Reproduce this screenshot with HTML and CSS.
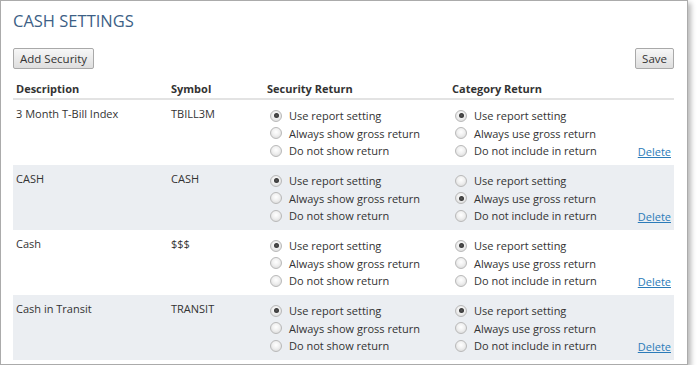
FILE: index.html
```html
<!DOCTYPE html>
<html>
<head>
<meta charset="utf-8">
<link rel="stylesheet" href="styles.css">
</head>
<body>
<div class="frame">
  <h1 class="title">CASH SETTINGS</h1>
  <div class="toolbar">
    <button class="btn">Add Security</button>
    <button class="btn">Save</button>
  </div>
  <div class="table">
    <div class="row head">
      <div class="cell">Description</div>
      <div class="cell">Symbol</div>
      <div class="cell">Security Return</div>
      <div class="cell">Category Return</div>
      <div class="cell"></div>
    </div>

    <div class="row">
      <div class="cell txt">3 Month T-Bill Index</div>
      <div class="cell txt">TBILL3M</div>
      <div class="cell opts">
        <div class="opt"><span class="radio on"></span>Use report setting</div>
        <div class="opt"><span class="radio"></span>Always show gross return</div>
        <div class="opt"><span class="radio"></span>Do not show return</div>
      </div>
      <div class="cell opts">
        <div class="opt"><span class="radio on"></span>Use report setting</div>
        <div class="opt"><span class="radio"></span>Always use gross return</div>
        <div class="opt"><span class="radio"></span>Do not include in return</div>
      </div>
      <div class="cell del"><a href="#">Delete</a></div>
    </div>

    <div class="row alt">
      <div class="cell txt">CASH</div>
      <div class="cell txt">CASH</div>
      <div class="cell opts">
        <div class="opt"><span class="radio on"></span>Use report setting</div>
        <div class="opt"><span class="radio"></span>Always show gross return</div>
        <div class="opt"><span class="radio"></span>Do not show return</div>
      </div>
      <div class="cell opts">
        <div class="opt"><span class="radio"></span>Use report setting</div>
        <div class="opt"><span class="radio on"></span>Always use gross return</div>
        <div class="opt"><span class="radio"></span>Do not include in return</div>
      </div>
      <div class="cell del"><a href="#">Delete</a></div>
    </div>

    <div class="row">
      <div class="cell txt">Cash</div>
      <div class="cell txt">$$$</div>
      <div class="cell opts">
        <div class="opt"><span class="radio on"></span>Use report setting</div>
        <div class="opt"><span class="radio"></span>Always show gross return</div>
        <div class="opt"><span class="radio"></span>Do not show return</div>
      </div>
      <div class="cell opts">
        <div class="opt"><span class="radio on"></span>Use report setting</div>
        <div class="opt"><span class="radio"></span>Always use gross return</div>
        <div class="opt"><span class="radio"></span>Do not include in return</div>
      </div>
      <div class="cell del"><a href="#">Delete</a></div>
    </div>

    <div class="row alt">
      <div class="cell txt">Cash in Transit</div>
      <div class="cell txt">TRANSIT</div>
      <div class="cell opts">
        <div class="opt"><span class="radio on"></span>Use report setting</div>
        <div class="opt"><span class="radio"></span>Always show gross return</div>
        <div class="opt"><span class="radio"></span>Do not show return</div>
      </div>
      <div class="cell opts">
        <div class="opt"><span class="radio on"></span>Use report setting</div>
        <div class="opt"><span class="radio"></span>Always use gross return</div>
        <div class="opt"><span class="radio"></span>Do not include in return</div>
      </div>
      <div class="cell del"><a href="#">Delete</a></div>
    </div>
  </div>
</div>
</body>
</html>
```

FILE: styles.css
```css
html, body {
  margin: 0;
  padding: 0;
  background: #ffffff;
}
body {
  font-family: "Open Sans", "Noto Sans", sans-serif;
  font-size: 11px;
  color: #333333;
}
.frame {
  box-sizing: border-box;
  width: 688px;
  height: 365px;
  border: 1px solid #ababab;
  box-shadow: 3px 3px 5px rgba(0, 0, 0, 0.28);
  padding: 0 13px 0 12px;
  background: #ffffff;
}
.title {
  margin: 0;
  padding-top: 9px;
  font-size: 16.5px;
  font-weight: 400;
  line-height: 22px;
  color: #3d5f86;
}
.toolbar {
  display: flex;
  justify-content: space-between;
  margin-top: 16px;
}
.btn {
  font-family: inherit;
  font-size: 11.5px;
  color: #333333;
  height: 21px;
  padding: 0 6px;
  border: 1px solid #a9a9a9;
  border-radius: 2px;
  background: linear-gradient(#f7f7f7, #dedede);
  line-height: 17px;
}
.table {
  margin-top: 11px;
}
.row {
  display: grid;
  grid-template-columns: 155px 96px 185px 1fr auto;
  height: 65px;
}
.row.head {
  font-weight: 700;
  border-bottom: 2px solid #e3e3e3;
  box-sizing: border-box;
  height: 20px;
}
.row.head .cell {
  line-height: 17px;
}
.row.alt {
  background: #ebeef2;
}
.cell {
  padding-left: 3px;
}
.txt {
  padding-top: 5px;
  line-height: 17px;
}
.opts {
  padding-top: 7px;
}
.opt {
  display: flex;
  align-items: center;
  height: 17.5px;
  line-height: 17px;
  white-space: nowrap;
}
.radio {
  box-sizing: border-box;
  width: 12px;
  height: 12px;
  border-radius: 50%;
  border: 1px solid #b9b9b9;
  background: radial-gradient(circle at 50% 40%, #ffffff 0%, #f0f0f0 45%, #d3d3d3 100%);
  margin: 0 7px 0 3px;
  position: relative;
  flex: none;
}
.radio.on::after {
  content: "";
  position: absolute;
  left: 2.5px;
  top: 2.5px;
  width: 5px;
  height: 5px;
  border-radius: 50%;
  background: radial-gradient(circle, #555 0%, #333 70%, #666 100%);
}
.del {
  display: flex;
  align-items: flex-end;
  padding: 0 3px 5px 0;
  line-height: 17px;
}
.del a {
  color: #2b7bb9;
  text-decoration: underline;
}
```
